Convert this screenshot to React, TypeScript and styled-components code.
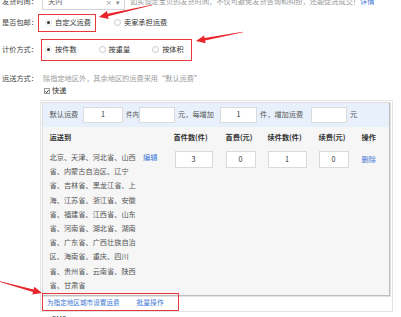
import React from "react";
import styled, { createGlobalStyle } from "styled-components";

const Global = createGlobalStyle`
  html, body { margin: 0; padding: 0; background: #fff; }
  body { width: 401px; height: 317px; overflow: hidden; font-family: "Noto Sans CJK SC", "Noto Sans", sans-serif; font-size: 7.2px; color: #444; }
  * { box-sizing: border-box; }
`;

const Page = styled.div`
  position: relative;
  width: 401px;
  height: 317px;
  overflow: hidden;
`;

const Form = styled.div`
  display: flex;
  flex-direction: column;
`;

const Row = styled.div<{ $h: number; $mt: number }>`
  display: flex;
  align-items: center;
  height: ${(p) => p.$h}px;
  margin-top: ${(p) => p.$mt}px;
`;

const Label = styled.div`
  width: 38px;
  flex: none;
  text-align: right;
  color: #444;
  white-space: nowrap;
  line-height: 1;
`;

const Select = styled.div`
  margin-left: 4px;
  width: 83px;
  height: 16px;
  border: 1px solid #d4d4d4;
  display: flex;
  align-items: center;
  padding: 0 4px 0 5px;
  color: #666;
  line-height: 1;
`;

const SelectText = styled.span`
  flex: 1;
`;

const SelectIcon = styled.span`
  color: #888;
  margin-left: 4px;
  font-size: 6.5px;
`;

const Hint = styled.span<{ $ml?: number }>`
  color: #9a9a9a;
  margin-left: ${(p) => p.$ml ?? 0}px;
  white-space: nowrap;
  line-height: 1;
`;

const Link = styled.a<{ $size?: number }>`
  color: #3b76d6;
  text-decoration: none;
  font-size: ${(p) => p.$size ?? 7.2}px;
  white-space: nowrap;
  line-height: 1;
`;

const Highlight = styled.div<{
  $h: number;
  $ml: number;
  $pl: number;
  $pr: number;
  $gap: number;
  $mt?: number;
  $w?: number;
}>`
  display: flex;
  align-items: center;
  gap: ${(p) => p.$gap}px;
  height: ${(p) => p.$h}px;
  ${(p) => (p.$w ? `width: ${p.$w}px;` : "")}
  margin-left: ${(p) => p.$ml}px;
  margin-top: ${(p) => p.$mt ?? 0}px;
  padding: 0 ${(p) => p.$pr}px 0 ${(p) => p.$pl}px;
  border: 1.5px solid #e5393b;
`;

const Option = styled.label<{ $ml?: number }>`
  display: inline-flex;
  align-items: center;
  gap: 3px;
  margin-left: ${(p) => p.$ml ?? 0}px;
  color: #333;
  white-space: nowrap;
  line-height: 1;
`;

const Radio = styled.span<{ $checked?: boolean }>`
  width: 7px;
  height: 7px;
  border-radius: 50%;
  border: 1px solid ${(p) => (p.$checked ? "#e6e6e6" : "#c9c9c9")};
  background: #fff;
  display: inline-flex;
  align-items: center;
  justify-content: center;
  &::after {
    content: "";
    width: 3px;
    height: 3px;
    border-radius: 50%;
    background: ${(p) => (p.$checked ? "#333" : "transparent")};
  }
`;

const CheckRow = styled.div<{ $mt: number }>`
  display: flex;
  align-items: center;
  gap: 2px;
  height: 12px;
  margin-top: ${(p) => p.$mt}px;
  padding-left: 44px;
  color: #333;
  line-height: 1;
`;

const CheckBox = styled.span`
  width: 6px;
  height: 6px;
  border: 1px solid #9a9a9a;
  background: #fff;
  display: inline-flex;
  align-items: center;
  justify-content: center;
`;

const Outer = styled.div`
  margin-top: 3px;
  margin-left: 40px;
  width: 353px;
  height: 212px;
  border: 1px solid #e4e4e4;
  display: flex;
  flex-direction: column;
`;

const Inner = styled.div`
  margin: 1px 0 0 1px;
  width: 348px;
  height: 194px;
  border: 1px solid #dcdcdc;
  border-right-color: #bdbdbd;
  border-bottom-color: #bdbdbd;
  background: #f6f6f6;
  box-shadow: 1px 1px 0 #e2e2e2;
  display: flex;
  flex-direction: column;
`;

const Bar = styled.div`
  height: 24px;
  background: #e8f0fb;
  display: flex;
  align-items: center;
  padding-left: 6.5px;
  color: #555;
`;

const Unit = styled.span<{ $w?: number; $size?: number; $pl?: number }>`
  ${(p) => (p.$w ? `width: ${p.$w}px;` : "")}
  flex: none;
  padding-left: ${(p) => p.$pl ?? 3}px;
  font-size: ${(p) => p.$size ?? 7.2}px;
  white-space: nowrap;
  line-height: 1;
`;

const Field = styled.div<{ $w: number; $h?: number; $ml?: number }>`
  width: ${(p) => p.$w}px;
  height: ${(p) => p.$h ?? 16}px;
  margin-left: ${(p) => p.$ml ?? 0}px;
  flex: none;
  background: #fff;
  border: 1px solid #dadada;
  display: flex;
  align-items: center;
  justify-content: center;
  color: #333;
  line-height: 1;
`;

const Grid = styled.div`
  display: grid;
  grid-template-columns: 124px 52px 42px 51px 43px 1fr;
  padding-left: 6.5px;
`;

const HeadCell = styled.div`
  height: 21px;
  display: flex;
  align-items: center;
  font-weight: 700;
  color: #333;
  white-space: nowrap;
  line-height: 1;
`;

const Cell = styled.div`
  padding-top: 3px;
  display: flex;
  align-items: flex-start;
`;

const Regions = styled.div`
  width: 12.15em;
  line-height: 14.2px;
  color: #555;
  margin-top: -1px;
`;

const EditLink = styled(Link)`
  margin-left: 6px;
  line-height: 14.2px;
  margin-top: -1px;
`;

const OpCell = styled(Cell)`
  padding-top: 3px;
  height: 20px;
  align-items: center;
`;

const Footer = styled.div`
  position: relative;
  z-index: 1;
  padding-left: 1px;
`;

const Overlay = styled.svg`
  position: absolute;
  left: 0;
  top: 0;
  pointer-events: none;
  z-index: 5;
`;

function arrow(x1: number, y1: number, x2: number, y2: number) {
  const dx = x2 - x1;
  const dy = y2 - y1;
  const L = Math.hypot(dx, dy);
  const ux = dx / L;
  const uy = dy / L;
  const nx = -uy;
  const ny = ux;
  const hl = 9;
  const hw = 4;
  const sw = 1.3;
  const tw = 0.35;
  const bx = x2 - ux * hl;
  const by = y2 - uy * hl;
  const pts = [
    [x1 + nx * tw, y1 + ny * tw],
    [bx + nx * sw, by + ny * sw],
    [bx + nx * hw, by + ny * hw],
    [x2, y2],
    [bx - nx * hw, by - ny * hw],
    [bx - nx * sw, by - ny * sw],
    [x1 - nx * tw, y1 - ny * tw],
  ];
  return pts.map((p) => p.map((v) => v.toFixed(1)).join(",")).join(" ");
}

const Check = () => (
  <svg width="5" height="5" viewBox="0 0 5 5">
    <path d="M0.6 2.6 L2 4 L4.5 0.8" fill="none" stroke="#222" strokeWidth="1.1" />
  </svg>
);

const regionText =
  "北京、天津、河北省、山西省、内蒙古自治区、辽宁省、吉林省、黑龙江省、上海、江苏省、浙江省、安徽省、福建省、江西省、山东省、河南省、湖北省、湖南省、广东省、广西壮族自治区、海南省、重庆、四川省、贵州省、云南省、陕西省、甘肃省";

export default function App() {
  return (
    <Page>
      <Global />
      <Form>
        <Row $h={16} $mt={-6}>
          <Label>发货时间：</Label>
          <Select>
            <SelectText>天内</SelectText>
            <SelectIcon>×</SelectIcon>
            <SelectIcon>▾</SelectIcon>
          </Select>
          <Hint $ml={5}>如实设定宝贝的发货时间，不仅可避免发货咨询和纠纷，还能促进成交！</Hint>
          <Link>详情</Link>
        </Row>
        <Row $h={18} $mt={4}>
          <Label>是否包邮：</Label>
          <Highlight $h={18} $ml={0} $pl={6} $pr={4} $gap={0}>
            <Option>
              <Radio $checked />
              自定义运费
            </Option>
          </Highlight>
          <Option $ml={18}>
            <Radio />
            卖家承担运费
          </Option>
        </Row>
        <Row $h={22} $mt={7}>
          <Label>计价方式：</Label>
          <Highlight $h={22} $ml={3} $pl={3} $pr={7} $gap={22}>
            <Option>
              <Radio $checked />
              按件数
            </Option>
            <Option>
              <Radio />
              按重量
            </Option>
            <Option>
              <Radio />
              按体积
            </Option>
          </Highlight>
        </Row>
        <Row $h={12} $mt={12}>
          <Label>运送方式：</Label>
          <Hint $ml={5}>除指定地区外，其余地区的运费采用“默认运费”</Hint>
        </Row>
        <CheckRow $mt={0}>
          <CheckBox>
            <Check />
          </CheckBox>
          快递
        </CheckRow>
        <Outer>
          <Inner>
            <Bar>
              <Unit $w={33.5} $pl={0}>默认运费</Unit>
              <Field $w={40}>1</Field>
              <Unit $w={16} $size={6.4}>件内</Unit>
              <Field $w={36} />
              <Unit $w={45}>元，每增加</Unit>
              <Field $w={37}>1</Field>
              <Unit $w={54}>件，增加运费</Unit>
              <Field $w={36} />
              <Unit>元</Unit>
            </Bar>
            <Grid>
              <HeadCell>运送到</HeadCell>
              <HeadCell>首件数(件)</HeadCell>
              <HeadCell>首费(元)</HeadCell>
              <HeadCell>续件数(件)</HeadCell>
              <HeadCell>续费(元)</HeadCell>
              <HeadCell>操作</HeadCell>
              <Cell>
                <Regions>{regionText}</Regions>
                <EditLink>编辑</EditLink>
              </Cell>
              <Cell>
                <Field $w={38} $h={17} $ml={1}>3</Field>
              </Cell>
              <Cell>
                <Field $w={30} $h={17}>0</Field>
              </Cell>
              <Cell>
                <Field $w={39} $h={17}>1</Field>
              </Cell>
              <Cell>
                <Field $w={30} $h={17}>0</Field>
              </Cell>
              <OpCell>
                <Link>删除</Link>
              </OpCell>
            </Grid>
          </Inner>
          <Footer>
            <Highlight $h={18} $ml={0} $mt={-3} $w={137} $pl={4} $pr={14} $gap={17}>
              <Link $size={6.6}>为指定地区城市设置运费</Link>
              <Link $size={6.8}>批量操作</Link>
            </Highlight>
          </Footer>
        </Outer>
        <CheckRow $mt={2}>
          <CheckBox />
          EMS
        </CheckRow>
      </Form>
      <Overlay width="401" height="317" viewBox="0 0 401 317">
        <polygon points={arrow(152, 5, 99, 17)} fill="#e8262b" />
        <polygon points={arrow(243, 32, 196, 41)} fill="#e8262b" />
        <polygon points={arrow(-2, 281, 42, 293)} fill="#e8262b" />
      </Overlay>
    </Page>
  );
}
